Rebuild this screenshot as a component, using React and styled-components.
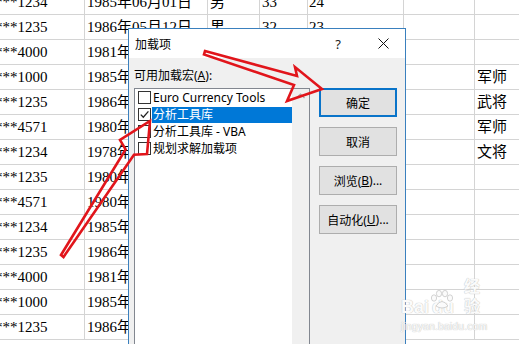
import React from 'react';
import styled, { createGlobalStyle } from 'styled-components';

const GlobalStyle = createGlobalStyle`
  html, body {
    margin: 0;
    padding: 0;
    background: #fff;
    overflow: hidden;
  }
`;

// Spreadsheet behind the dialog
const Screen = styled.div`
  position: relative;
  width: 519px;
  height: 344px;
  overflow: hidden;
  background: #fff;
`;

const Sheet = styled.div`
  margin-top: -10px;
  font-family: "Liberation Serif", "Noto Sans CJK SC", serif;
  font-size: 15px;
  color: #000;
`;

const Row = styled.div`
  display: flex;
  height: 25px;
  box-sizing: border-box;
  border-bottom: 1px solid #d4d4d4;
`;

const Cell = styled.div`
  flex: 0 0 ${p => p.$w}px;
  box-sizing: border-box;
  border-right: 1px solid #d4d4d4;
  padding: 1px 0 0 ${p => p.$pad}px;
  line-height: 23px;
  white-space: nowrap;
  overflow: hidden;
`;

const Masked = styled.span`
  display: inline-block;
  margin-left: -5px;
`;

// Dialog
const Dialog = styled.div`
  position: absolute;
  left: 128px;
  top: 28px;
  width: 278px;
  height: 330px;
  box-sizing: border-box;
  border: 1px solid #3a80be;
  background: #f0f0f0;
  display: flex;
  flex-direction: column;
  font-family: "Noto Sans", "Noto Sans CJK SC", sans-serif;
  font-size: 12px;
  color: #000;
`;

const TitleBar = styled.div`
  height: 29px;
  flex: 0 0 29px;
  background: #fff;
  display: flex;
  align-items: center;
  padding-left: 6px;
`;

const Title = styled.div`
  flex: 1;
  padding-top: 1px;
`;

const HelpButton = styled.div`
  width: 30px;
  text-align: center;
  font-size: 13px;
  color: #222;
`;

const CloseButton = styled.div`
  width: 44px;
  margin-left: 8px;
  display: flex;
  align-items: center;
  justify-content: center;
`;

const Body = styled.div`
  flex: 1;
  display: flex;
  flex-direction: column;
  padding: 0 5px;
`;

const FieldLabel = styled.div`
  padding-top: 10px;
  line-height: 16px;
`;

const Main = styled.div`
  flex: 1;
  display: flex;
  gap: 9px;
  margin-top: 4px;
`;

const ListBox = styled.div`
  width: 176px;
  box-sizing: border-box;
  border: 1px solid #828790;
  background: #fff;
  display: flex;
`;

const Items = styled.div`
  flex: 1;
  display: flex;
  flex-direction: column;
`;

const Item = styled.div`
  height: 17px;
  display: flex;
  align-items: center;
`;

const Check = styled.div`
  width: 13px;
  height: 13px;
  box-sizing: border-box;
  margin-left: 3px;
  border: 1px solid #333;
  background: #fff;
  display: flex;
  align-items: center;
  justify-content: center;
`;

const ItemText = styled.div`
  flex: 1;
  margin-left: 1px;
  padding-left: 1px;
  line-height: 16px;
  white-space: nowrap;
  background: ${p => (p.$selected ? '#0078d7' : 'transparent')};
  color: ${p => (p.$selected ? '#fff' : '#000')};
`;

const ScrollBar = styled.div`
  width: 17px;
  background: #f0f0f0;
  display: flex;
  justify-content: center;
  padding-top: 4px;
  box-sizing: border-box;
`;

const Buttons = styled.div`
  width: 78px;
  display: flex;
  flex-direction: column;
  gap: 10px;
`;

const Button = styled.div`
  height: 29px;
  box-sizing: border-box;
  border: ${p => (p.$default ? '2px solid #0a74c9' : '1px solid #adadad')};
  background: #e1e1e1;
  display: flex;
  align-items: center;
  justify-content: center;
`;

// Overlays
const Overlay = styled.svg`
  position: absolute;
  left: 0;
  top: 0;
  pointer-events: none;
`;

const Watermark = styled.div`
  position: absolute;
  left: 401px;
  top: 289px;
  width: 94px;
  color: #fbfbfb;
  text-shadow: 0 0 1px #c0c0c0, 0 0 1px #cfcfcf;
  font-family: "Liberation Sans", "Noto Sans CJK SC", sans-serif;
`;

const LogoLine = styled.div`
  display: flex;
  align-items: flex-end;
  height: 28px;
  font-weight: bold;
  font-size: 18px;
  line-height: 20px;
`;

const LogoCn = styled.span`
  font-size: 16px;
  margin-left: 10px;
  line-height: 20px;
`;

const Paw = styled.svg`
  position: absolute;
  left: 28px;
  top: 1px;
`;

const Site = styled.div`
  font-size: 10.5px;
  line-height: 12px;
  margin-top: 3px;
  letter-spacing: 0.1px;
`;

const widths = [85, 123, 52, 48, 96, 71, 80];
const pads = [0, 2, 2, 2, 1, 2, 2];

const rows = [
  ['***1234', '1985年06月01日', '男', '33', '24', '', ''],
  ['***1235', '1986年05月12日', '男', '32', '23', '', ''],
  ['***4000', '1981年03月15日', '女', '37', '28', '', ''],
  ['***1000', '1985年08月20日', '男', '33', '24', '', '军师'],
  ['***1235', '1986年02月11日', '男', '32', '23', '', '武将'],
  ['***4571', '1980年11月05日', '男', '38', '29', '', '军师'],
  ['***1234', '1978年07月09日', '男', '40', '31', '', '文将'],
  ['***1235', '1980年01月21日', '男', '38', '29', '', ''],
  ['***4571', '1980年04月17日', '女', '38', '29', '', ''],
  ['***1234', '1985年09月30日', '男', '33', '24', '', ''],
  ['***1235', '1986年12月02日', '男', '32', '23', '', ''],
  ['***4000', '1981年06月08日', '女', '37', '28', '', ''],
  ['***1000', '1985年10月10日', '男', '33', '24', '', ''],
  ['***1235', '1986年03月25日', '男', '32', '23', '', ''],
];

const addins = [
  { name: 'Euro Currency Tools', checked: false },
  { name: '分析工具库', checked: true, selected: true },
  { name: '分析工具库 - VBA', checked: false },
  { name: '规划求解加载项', checked: false },
];

const CheckMark = () => (
  <svg width="11" height="11" viewBox="0 0 11 11">
    <path d="M1.8 5.6 L4.3 8.2 L9.4 2.4" fill="none" stroke="#222" strokeWidth="1.3" />
  </svg>
);

const App = () => (
  <Screen>
    <GlobalStyle />
    <Sheet>
      {rows.map((r, i) => (
        <Row key={i}>
          {r.map((v, j) => (
            <Cell key={j} $w={widths[j]} $pad={pads[j]}>
              {j === 0 ? <Masked>{v}</Masked> : v}
            </Cell>
          ))}
        </Row>
      ))}
    </Sheet>

    <Dialog>
      <TitleBar>
        <Title>加载项</Title>
        <HelpButton>?</HelpButton>
        <CloseButton>
          <svg width="11" height="11" viewBox="0 0 11 11">
            <path d="M0.5 0.5 L10.5 10.5 M10.5 0.5 L0.5 10.5" stroke="#111" strokeWidth="1" />
          </svg>
        </CloseButton>
      </TitleBar>
      <Body>
        <FieldLabel>可用加载宏(<u>A</u>):</FieldLabel>
        <Main>
          <ListBox>
            <Items>
              {addins.map(a => (
                <Item key={a.name}>
                  <Check>{a.checked && <CheckMark />}</Check>
                  <ItemText $selected={a.selected}>{a.name}</ItemText>
                </Item>
              ))}
            </Items>
            <ScrollBar>
              <svg width="9" height="6" viewBox="0 0 9 6">
                <path d="M0.5 5 L4.5 1 L8.5 5" fill="none" stroke="#a6a6a6" strokeWidth="1.2" />
              </svg>
            </ScrollBar>
          </ListBox>
          <Buttons>
            <Button $default>确定</Button>
            <Button>取消</Button>
            <Button>浏览(<u>B</u>)...</Button>
            <Button>自动化(<u>U</u>)...</Button>
          </Buttons>
        </Main>
      </Body>
    </Dialog>

    <Overlay width="519" height="344" viewBox="0 0 519 344">
      <polygon
        points="205,51 297,76 295,67 322,89 287,101 294,85 204,54.5"
        fill="none"
        stroke="#e1151b"
        strokeWidth="2.6"
        strokeLinejoin="miter"
      />
      <polygon
        points="61,255 125.6,149.4 120,140 150,121 147,154 134,154.8 63.5,257"
        fill="none"
        stroke="#e1151b"
        strokeWidth="2.6"
        strokeLinejoin="miter"
      />
    </Overlay>

    <Watermark>
      <LogoLine>
        <span>Bai</span>
        <span style={{ marginLeft: 3 }}>du</span>
        <LogoCn>经验</LogoCn>
      </LogoLine>
      <Paw width="26" height="20" viewBox="0 0 26 20">
        <g fill="#fbfbfb" stroke="#c8c8c8" strokeWidth="0.8">
          <ellipse cx="5" cy="8" rx="2.6" ry="3.2" />
          <ellipse cx="10" cy="3.6" rx="2.6" ry="3.2" />
          <ellipse cx="16" cy="3.6" rx="2.6" ry="3.2" />
          <ellipse cx="21" cy="8" rx="2.6" ry="3.2" />
          <path d="M7 16 Q13 7 19 16 Q13 20 7 16 Z" />
        </g>
      </Paw>
      <Site>jingyan.baidu.com</Site>
    </Watermark>
  </Screen>
);

export default App;
